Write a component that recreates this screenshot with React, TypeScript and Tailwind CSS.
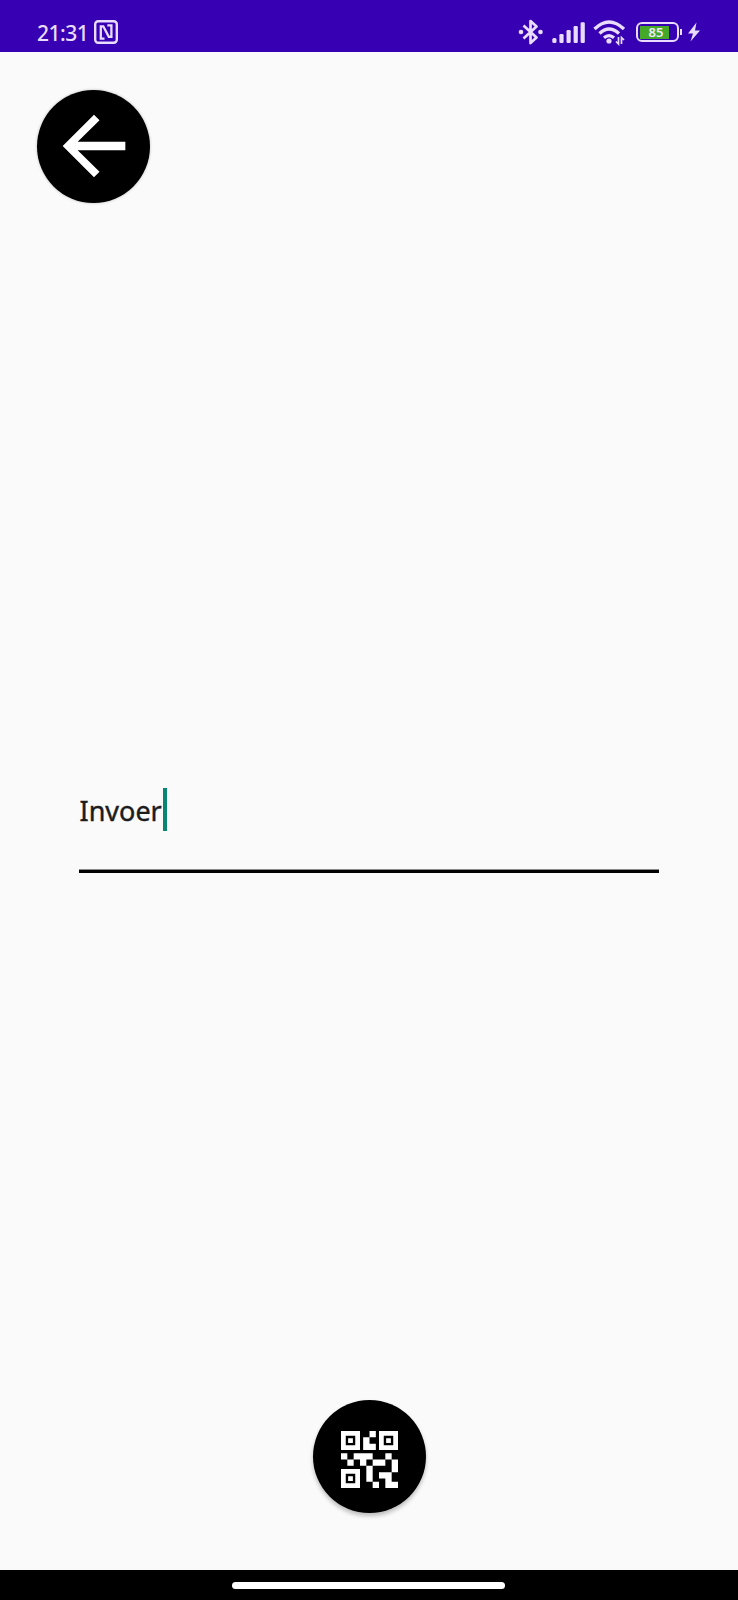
const S = "#e9dcff";

function StatusBar() {
  return (
    <header className="flex h-[52px] w-full shrink-0 items-start bg-[#3700b3]">
      <span className="ml-[37px] mt-[20px] h-[26px] w-[52px] whitespace-nowrap font-['Noto_Sans','Open_Sans',sans-serif] text-[21px] font-medium leading-[26px] tracking-[-0.5px] text-[#e9dcff]">
        21:31
      </span>
      <svg className="ml-[5px] mt-[20px]" width="24" height="24" viewBox="0 0 24 24" fill="none" stroke={S}>
        <rect x="1.200" y="1.200" width="21.600" height="21.600" rx="3" strokeWidth="2.400" />
        <path d="M10.500 18.700H6.800V6.300H9.300L14.800 16.800H17.400V5.300H13.300" strokeWidth="2.300" />
      </svg>
      <svg className="ml-[400px] mt-[18px]" width="26" height="28" viewBox="0 0 26 28" fill="none" stroke={S} strokeWidth="2.700">
        <path d="M5.500 7.500L18.500 19.500L12.500 25V3L18.500 8.500L5.500 20.500" strokeLinejoin="round" />
        <circle cx="3" cy="14" r="2.300" fill={S} stroke="none" />
        <circle cx="22.500" cy="14" r="2.300" fill={S} stroke="none" />
      </svg>
      <svg className="ml-[8px] mt-[21px]" width="34" height="23" viewBox="0 0 34 23" fill={S}>
        <rect x="0.300" y="17" width="4.200" height="5" rx="1.500" />
        <rect x="7.400" y="13" width="4.200" height="9" rx="1.200" />
        <rect x="14.500" y="9" width="4.200" height="13" rx="1.200" />
        <rect x="21.600" y="5" width="4.200" height="17" rx="1.200" />
        <rect x="28.600" y="1.300" width="4.200" height="20.700" rx="1.200" />
      </svg>
      <svg className="ml-[7px] mt-[19px]" width="34" height="27" viewBox="0 0 34 27" fill="none" stroke={S} strokeWidth="3.300">
        <path d="M1.500 10Q16-4 31 10M6.500 14.500Q16 5.500 26 14.500M11 18.700Q16 14.500 21 18.700" />
        <circle cx="16" cy="22" r="2.600" fill={S} stroke="none" />
        <path d="M25.500 18V25L23 22.500M28.500 25V18.500L31 21" strokeWidth="1.700" />
      </svg>
      <div className="ml-[8.500px] mt-[22px] flex h-[20px] w-[43.500px] items-center rounded-[6px] border-2 border-[#e9dcff] px-[2px]">
        <div className="flex h-[13px] w-[29px] items-center justify-center bg-[#44a928] pl-[4px] font-['Noto_Sans',sans-serif] text-[13px] font-semibold leading-[13px] text-[#f1e9ff]">
          85
        </div>
      </div>
      <div className="ml-px mt-[29px] h-[6px] w-[2px] bg-[#e9dcff]" />
      <svg className="ml-[5px] mt-[22px]" width="14" height="20" viewBox="0 0 14 20" fill={S}>
        <path d="M9.500 0.500L1 11.500H6L3.500 19.500L13 8.500H8Z" />
      </svg>
    </header>
  );
}

function QrIcon() {
  return (
    <svg className="mt-[5px]" width="57" height="57" viewBox="3 3 18 18" fill="#fff">
      <path d="M15 21h-2v-2h2v2zm-2-7h-2v5h2v-5zm8-2h-2v4h2v-4zm-2-2h-2v2h2v-2zM7 12H5v2h2v-2zm-2-2H3v2h2v-2zm7-5h2V3h-2v2zm-7.500-.5v3h3v-3h-3zM9 9H3V3h6v6zm-4.500 7.500v3h3v-3h-3zM9 21H3v-6h6v6zm7.500-16.500v3h3v-3h-3zM21 9h-6V3h6v6zm-2 10v-3h-4v2h2v3h4v-2h-2zm-2-7h-4v2h4v-2zm-4-2H7v2h2v2h2v-2h2v-2zm1-1V7h-2V5h-2v4h4zM6.750 5.250h-1.500v1.500h1.500v-1.500zm0 12h-1.500v1.500h1.500v-1.500zm12-12h-1.500v1.500h1.500v-1.500z" />
    </svg>
  );
}

export default function App() {
  return (
    <div className="flex h-[1600px] w-[738px] flex-col overflow-hidden bg-[#fafafa]">
      <StatusBar />
      <main className="flex flex-1 flex-col">
        <button aria-label="Terug" className="ml-[37px] mt-[37.500px] flex size-[113px] items-center justify-center rounded-full bg-black shadow-[0_0_3px_rgba(0,0,0,0.25)]">
          <svg width="94" height="94" viewBox="0 0 24 24" fill="#fff">
            <path d="M20 10.900H7.830l5.590-5.490L12 4l-8 8 8 8 1.410-1.410L7.830 13.100H20z" />
          </svg>
        </button>
        <div className="ml-[79px] mt-[585.500px] flex h-[85px] w-[580px] items-start border-b-[3px] border-black shadow-[inset_0_-1px_0_#8a8a8a]">
          <span className="mt-[5px] w-[83.500px] whitespace-nowrap pl-[0.500px] font-['Noto_Sans',sans-serif] text-[27px] leading-[36px] text-[#1c1c1c] [-webkit-text-stroke:0.4px_#1c1c1c]">
            Invoer
          </span>
          <div className="h-[43px] w-[4.500px] bg-[#078673]" />
        </div>
        <button aria-label="QR-code scannen" className="mx-auto mt-[527px] flex size-[113px] items-center justify-center rounded-full bg-black shadow-[0_3px_4px_rgba(0,0,0,0.25)]">
          <QrIcon />
        </button>
      </main>
      <footer className="flex h-[30px] shrink-0 items-center justify-center bg-black pr-px">
        <div className="h-[7px] w-[273px] rounded-full bg-white" />
      </footer>
    </div>
  );
}
